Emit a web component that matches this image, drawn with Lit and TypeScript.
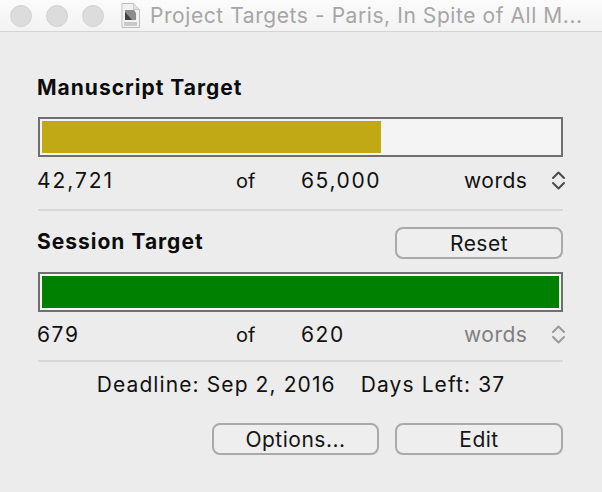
import { LitElement, html, css } from "lit";
import { customElement } from "lit/decorators.js";

@customElement("app-root")
export class AppRoot extends LitElement {
  static styles = css`
    :host { display: block; width: 602px; height: 492px; overflow: hidden; background: #ececec; font-family: Inter, "Liberation Sans", sans-serif; color: #111; }
    .titlebar { height: 32px; box-sizing: border-box; display: flex; align-items: center; background: linear-gradient(#fbfbfb, #f3f3f3); border-bottom: 1px solid #d4d4d4; padding-left: 10px; }
    .lights { display: flex; gap: 14px; }
    .light { width: 22px; height: 22px; border-radius: 50%; background: #dcdcdc; border: 1px solid #d2d2d2; box-sizing: border-box; }
    .doc { width: 19px; height: 25px; margin-left: 17px; flex: none; }
    .title { margin-left: 10px; font-size: 21px; letter-spacing: 0.57px; color: #a6a6a6; white-space: nowrap; }
    .content { padding: 43px 39px 0 37px; display: flex; flex-direction: column; }
    .heading { font-size: 21px; font-weight: 700; line-height: 26px; letter-spacing: 1px; color: #0c0c0c; }
    .bar { box-sizing: border-box; height: 40px; margin-left: 1px; border: 2px solid #6f6f6f; background: #f4f4f4; padding: 2px; }
    .bar.m { margin-top: 16px; }
    .bar.s { margin-top: 13px; }
    .fill { height: 100%; }
    .row { display: grid; grid-template-columns: 199px 65px 163px 85px 1fr; align-items: center; height: 24px; font-size: 21px; margin-top: 11px; letter-spacing: 1.6px; }
    .row.tight { margin-top: 10px; }
    .wide { letter-spacing: 1.95px; }
    .of { font-size: 20px; letter-spacing: 0; }
    .unit { letter-spacing: 0.5px; }
    .muted { color: #7f7f7f; }
    .stepper { width: 15px; height: 21px; margin-left: 2px; display: block; }
    .divider { height: 2px; background: #d8d8d8; margin-left: 1px; }
    .d1 { margin-top: 17px; }
    .d2 { margin-top: 14px; }
    .session { display: flex; justify-content: space-between; align-items: center; margin-top: 16px; }
    .session .heading { padding-bottom: 2px; }
    button { box-sizing: border-box; width: 168px; height: 32px; border: 2px solid #a9a9a9; border-radius: 8px; background: #eeeeee; font: inherit; font-size: 21px; letter-spacing: 0.5px; color: #151515; padding: 0; }
    button.narrow { width: 167px; }
    .deadline { font-size: 21px; line-height: 26px; margin-top: 10px; padding-left: 2px; letter-spacing: 1.1px; display: flex; justify-content: center; gap: 25px; }
    .actions { display: flex; justify-content: flex-end; gap: 16px; margin-top: 25px; }
  `;

  private stepper(color: string) {
    return html`<svg class="stepper" viewBox="0 0 15 21" fill="none" stroke=${color} stroke-width="2" stroke-linecap="round" stroke-linejoin="round"><path d="M2 8 L7.5 2.5 L13 8"/><path d="M2 13 L7.5 18.5 L13 13"/></svg>`;
  }

  render() {
    return html`
      <div class="titlebar">
        <div class="lights"><div class="light"></div><div class="light"></div><div class="light"></div></div>
        <svg class="doc" viewBox="0 0 19 25">
          <path d="M1 .5H12.5L18.5 6.5V24.5H1Z" fill="#f2f2f2" stroke="#bdbdbd"/>
          <path d="M12.5 .5V6.5H18.5" fill="#e2e2e2" stroke="#c8c8c8"/>
          <path d="M4 7H13L15 10V17H4Z" fill="#8d8d8d"/>
          <path d="M4 9L11 17H4Z" fill="#3f3f3f"/>
          <rect x="3" y="19" width="13" height="4" fill="#c9c9c9"/>
        </svg>
        <div class="title">Project Targets - Paris, In Spite of All M...</div>
      </div>
      <div class="content">
        <div class="heading">Manuscript Target</div>
        <div class="bar m"><div class="fill" style="width:${(42721 / 65000) * 100 - 0.2}%;background:#c1a916"></div></div>
        <div class="row"><span class="wide">42,721</span><span class="of">of</span><span>65,000</span><span class="unit">words</span>${this.stepper("#4a4a4a")}</div>
        <div class="divider d1"></div>
        <div class="session"><div class="heading">Session Target</div><button>Reset</button></div>
        <div class="bar s"><div class="fill" style="width:100%;background:#008000"></div></div>
        <div class="row tight"><span>679</span><span class="of">of</span><span>620</span><span class="unit muted">words</span>${this.stepper("#9a9a9a")}</div>
        <div class="divider d2"></div>
        <div class="deadline"><span>Deadline: Sep 2, 2016</span><span>Days Left: 37</span></div>
        <div class="actions"><button class="narrow">Options...</button><button>Edit</button></div>
      </div>
    `;
  }
}
